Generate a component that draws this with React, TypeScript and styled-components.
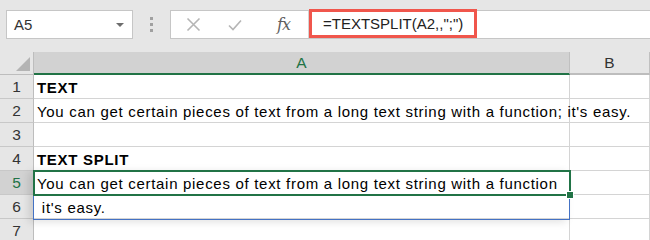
import React from 'react';
import styled, { createGlobalStyle } from 'styled-components';

const Global = createGlobalStyle`
  html, body { margin: 0; padding: 0; background: #ffffff; }
  body { font-family: "Liberation Sans", Arial, sans-serif; overflow: hidden; }
  * { box-sizing: border-box; }
`;

const Page = styled.div`
  width: 650px;
  height: 240px;
  overflow: hidden;
  display: flex;
  flex-direction: column;
`;

const Toolbar = styled.div`
  height: 52px;
  flex: none;
  background: #e6e6e6;
  display: flex;
  align-items: flex-start;
  padding: 10px 0 0 6px;
`;

const NameBox = styled.div`
  width: 127px;
  height: 29px;
  background: #fff;
  border: 1px solid #c6c6c6;
  display: flex;
  align-items: center;
  justify-content: space-between;
  padding: 0 8px 0 7px;
  font-size: 15px;
  color: #333;
`;

const Caret = styled.div`
  width: 0;
  height: 0;
  border-left: 4px solid transparent;
  border-right: 4px solid transparent;
  border-top: 4px solid #6d6d6d;
  margin-top: 1px;
`;

const Grip = styled.div`
  width: 37px;
  height: 29px;
  display: flex;
  flex-direction: column;
  align-items: center;
  justify-content: center;
  gap: 3px;
`;

const GripDot = styled.span`
  width: 3px;
  height: 3px;
  background: #a0a0a0;
`;

const FormulaBox = styled.div`
  flex: 1;
  height: 29px;
  background: #fff;
  border: 1px solid #c6c6c6;
  border-right: none;
  display: flex;
  align-items: stretch;
`;

const IconArea = styled.div`
  width: 137px;
  display: flex;
  align-items: center;
  padding-left: 15px;
  gap: 27px;
`;

const Fx = styled.span`
  font-family: "DejaVu Serif", "Liberation Serif", serif;
  font-style: italic;
  font-size: 16px;
  color: #606060;
  margin-left: 8px;
  letter-spacing: -1px;
`;

const InputArea = styled.div`
  flex: 1;
  border-left: 1px solid #d4d4d4;
  display: flex;
  align-items: stretch;
`;

const Highlight = styled.div`
  width: 168px;
  margin: -2px 0 0 0;
  height: 29px;
  border: 3px solid #f0564c;
  display: flex;
  align-items: center;
  padding-left: 11px;
  font-size: 15px;
  color: #222;
`;

const Grid = styled.div`
  position: relative;
  display: flex;
  flex-direction: column;
`;

const Row = styled.div<{ $h?: number }>`
  display: flex;
  height: ${(p) => p.$h ?? 24}px;
`;

const Corner = styled.div`
  width: 34px;
  background: #e6e6e6;
  border-right: 1px solid #bdbdbd;
  border-bottom: 1px solid #bdbdbd;
  position: relative;
  display: flex;
  align-items: flex-end;
  justify-content: flex-end;
  padding: 0 3px 3px 0;
`;

const ColHead = styled.div<{ $w?: number; $sel?: boolean }>`
  ${(p) => (p.$w ? `width: ${p.$w}px;` : 'flex: 1;')}
  background: ${(p) => (p.$sel ? '#d2d2d2' : '#e6e6e6')};
  border-right: 1px solid #c0c0c0;
  border-bottom: 2px solid ${(p) => (p.$sel ? '#217346' : '#bdbdbd')};
  display: flex;
  align-items: center;
  justify-content: center;
  font-size: 15.5px;
  color: ${(p) => (p.$sel ? '#217346' : '#333')};
  padding-top: 1px;
`;

const RowHead = styled.div<{ $sel?: boolean }>`
  width: 34px;
  background: ${(p) => (p.$sel ? '#d2d2d2' : '#e6e6e6')};
  border-right: 1px solid #bdbdbd;
  border-bottom: 1px solid #c8c8c8;
  display: flex;
  align-items: center;
  justify-content: center;
  font-size: 15.5px;
  color: ${(p) => (p.$sel ? '#217346' : '#333')};
`;

const Cell = styled.div<{ $w?: number; $bold?: boolean }>`
  ${(p) => (p.$w ? `width: ${p.$w}px;` : 'flex: 1;')}
  border-right: 1px solid #d4d4d4;
  border-bottom: 1px solid #d4d4d4;
  display: flex;
  align-items: center;
  padding: 2px 0 0 3px;
  font-size: 15px;
  letter-spacing: 0.7px;
  font-weight: ${(p) => (p.$bold ? 700 : 400)};
  color: #000;
  white-space: pre;
  overflow: visible;
`;

const Spill = styled.div`
  position: absolute;
  left: 33px;
  top: 118px;
  width: 537px;
  height: 50px;
  border: 1px solid #4472c4;
  box-shadow: -4px 2px 8px rgba(0, 0, 0, 0.12);
  pointer-events: none;
`;

const Selection = styled.div`
  position: absolute;
  left: 33px;
  top: 118px;
  width: 538px;
  height: 26px;
  border: 2px solid #217346;
  pointer-events: none;
`;

const Handle = styled.div`
  position: absolute;
  right: -4px;
  bottom: -4px;
  width: 6px;
  height: 6px;
  background: #217346;
  outline: 1px solid #fff;
`;

const rows: { n: number; text: string; bold?: boolean }[] = [
  { n: 1, text: 'TEXT', bold: true },
  { n: 2, text: "You can get certain pieces of text from a long text string with a function; it's easy." },
  { n: 3, text: '' },
  { n: 4, text: 'TEXT SPLIT', bold: true },
  { n: 5, text: 'You can get certain pieces of text from a long text string with a function' },
  { n: 6, text: " it's easy." },
  { n: 7, text: '' },
];

export default function App() {
  return (
    <Page>
      <Global />
      <Toolbar>
        <NameBox>
          <span>A5</span>
          <Caret />
        </NameBox>
        <Grip>
          <GripDot />
          <GripDot />
          <GripDot />
        </Grip>
        <FormulaBox>
          <IconArea>
            <svg width="15" height="15" viewBox="0 0 15 15">
              <path d="M1.5 1.5 L13.5 13.5 M13.5 1.5 L1.5 13.5" stroke="#b5b5b5" strokeWidth="1.6" fill="none" />
            </svg>
            <svg width="14" height="12" viewBox="0 0 14 12">
              <path d="M1 6.5 L5 10.5 L13 1.5" stroke="#b5b5b5" strokeWidth="1.6" fill="none" />
            </svg>
            <Fx>fx</Fx>
          </IconArea>
          <InputArea>
            <Highlight>=TEXTSPLIT(A2,,";")</Highlight>
          </InputArea>
        </FormulaBox>
      </Toolbar>
      <Grid>
        <Row $h={23}>
          <Corner>
            <svg width="14" height="14" viewBox="0 0 14 14">
              <path d="M14 0 L14 14 L0 14 Z" fill="#b4b4b4" />
            </svg>
          </Corner>
          <ColHead $w={536} $sel>A</ColHead>
          <ColHead>B</ColHead>
        </Row>
        {rows.map((r) => (
          <Row key={r.n}>
            <RowHead $sel={r.n === 5}>{r.n}</RowHead>
            <Cell $w={536} $bold={r.bold}>{r.text}</Cell>
            <Cell />
          </Row>
        ))}
        <Spill />
        <Selection>
          <Handle />
        </Selection>
      </Grid>
    </Page>
  );
}
